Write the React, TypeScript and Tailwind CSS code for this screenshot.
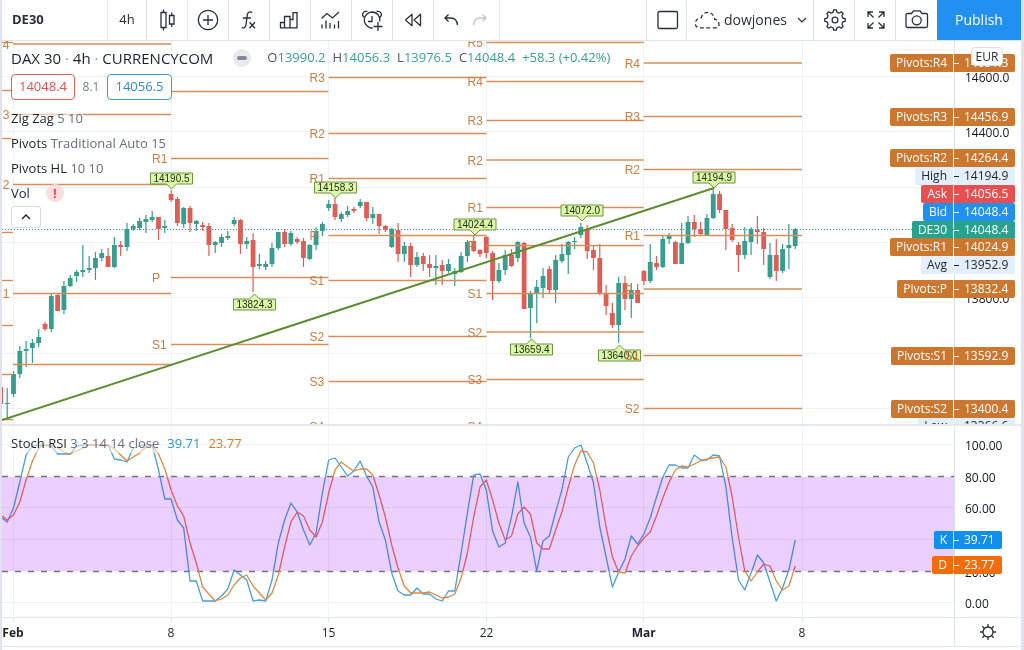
import type { ReactNode } from 'react'

type Candle = [high: number, top: number, bottom: number, low: number, dir: 'u' | 'd']
type Point = [bar: number, y: number]

const BAR = 6.304
const FIRST_X = 11.5
const barX = (i: number) => FIRST_X + i * BAR

// wick top, body top, body bottom, wick bottom in pane space, first item is bar -1
const CANDLES: Candle[] = [
  [347, 362, 363, 377, 'u'], [330, 333, 353, 356, 'u'], [305, 310, 333, 337, 'u'], [300, 308, 310, 326, 'u'],
  [298, 302, 307, 322, 'u'], [288, 296, 302, 306, 'u'], [281, 283, 288, 290, 'd'], [252, 255, 288, 291, 'u'],
  [253, 254, 270, 270, 'd'], [240, 245, 269, 273, 'u'], [234, 237, 245, 246, 'u'], [229, 231, 235, 241, 'u'],
  [204, 229, 231, 236, 'u'], [215, 227, 229, 232, 'u'], [211, 217, 227, 239, 'u'], [208, 212, 217, 220, 'u'],
  [207, 215, 226, 226, 'd'], [196, 204, 226, 227, 'u'], [200, 204, 206, 215, 'd'], [182, 188, 206, 210, 'u'],
  [183, 185, 188, 190, 'u'], [177, 180, 187, 189, 'u'], [174, 178, 181, 192, 'u'], [170, 176, 179, 181, 'u'],
  [176, 176, 188, 199, 'd'], [179, 185, 187, 192, 'u'], [149, 153, 159, 161, 'd'], [156, 158, 182, 185, 'd'],
  [166, 167, 183, 187, 'u'], [165, 167, 182, 191, 'd'], [179, 180, 183, 190, 'u'], [181, 184, 186, 190, 'd'],
  [182, 185, 204, 215, 'd'], [200, 201, 204, 212, 'u'], [193, 196, 202, 206, 'u'], [190, 195, 197, 199, 'u'],
  [176, 179, 183, 185, 'u'], [178, 179, 203, 213, 'd'], [196, 200, 203, 208, 'u'], [192, 199, 226, 251, 'd'],
  [213, 223, 225, 228, 'u'], [220, 223, 226, 229, 'u'], [202, 207, 223, 226, 'u'], [191, 191, 207, 209, 'u'],
  [188, 191, 203, 206, 'd'], [190, 192, 203, 205, 'u'], [196, 198, 201, 203, 'd'], [197, 200, 217, 226, 'd'],
  [203, 204, 218, 219, 'u'], [186, 190, 204, 209, 'u'], [181, 183, 190, 195, 'u'], [159, 163, 167, 170, 'u'],
  [157, 163, 176, 179, 'd'], [171, 173, 178, 181, 'u'], [165, 170, 174, 176, 'u'], [166, 168, 170, 172, 'd'],
  [158, 161, 165, 167, 'u'], [161, 161, 177, 180, 'd'], [166, 173, 177, 183, 'u'], [173, 173, 185, 193, 'd'],
  [184, 185, 189, 191, 'd'], [187, 188, 206, 207, 'u'], [182, 189, 213, 221, 'd'], [201, 205, 213, 221, 'u'],
  [202, 205, 224, 236, 'd'], [211, 216, 224, 226, 'u'], [212, 215, 223, 230, 'd'], [214, 223, 227, 236, 'd'],
  [214, 225, 227, 244, 'u'], [219, 224, 230, 244, 'd'], [218, 223, 230, 232, 'u'], [227, 230, 233, 245, 'u'],
  [211, 215, 231, 232, 'u'], [199, 201, 215, 221, 'u'], [194, 200, 210, 211, 'd'], [208, 209, 213, 216, 'd'],
  [195, 196, 212, 217, 'd'], [210, 212, 240, 259, 'd'], [222, 229, 240, 242, 'u'], [209, 214, 229, 234, 'u'],
  [208, 214, 225, 226, 'd'], [200, 201, 217, 221, 'u'], [201, 202, 268, 268, 'd'], [250, 252, 267, 297, 'u'],
  [239, 246, 252, 282, 'u'], [227, 235, 247, 257, 'u'], [225, 228, 249, 252, 'd'], [214, 219, 249, 262, 'u'],
  [203, 213, 220, 222, 'u'], [200, 201, 214, 233, 'u'], [196, 200, 201, 208, 'u'], [182, 186, 194, 197, 'u'],
  [184, 188, 210, 218, 'd'], [204, 209, 217, 229, 'd'], [203, 217, 253, 254, 'd'], [244, 252, 265, 274, 'd'],
  [262, 272, 284, 287, 'd'], [236, 242, 284, 302, 'u'], [235, 242, 258, 269, 'd'], [242, 249, 258, 277, 'u'],
  [243, 249, 262, 262, 'd'], [229, 230, 240, 244, 'd'], [203, 221, 240, 242, 'u'], [215, 222, 226, 229, 'd'],
  [195, 198, 226, 227, 'u'], [192, 194, 198, 203, 'u'], [200, 201, 223, 223, 'd'], [182, 202, 223, 223, 'u'],
  [175, 181, 202, 203, 'u'], [174, 181, 188, 196, 'd'], [181, 188, 193, 195, 'd'], [173, 177, 195, 195, 'u'],
  [148, 153, 177, 178, 'u'], [150, 153, 169, 172, 'd'], [169, 169, 188, 209, 'd'], [183, 187, 199, 201, 'd'],
  [201, 204, 214, 231, 'd'], [186, 200, 214, 218, 'u'], [186, 188, 201, 214, 'u'], [175, 189, 191, 203, 'd'],
  [187, 191, 208, 224, 'd'], [202, 214, 236, 238, 'u'], [198, 214, 230, 240, 'd'], [203, 208, 230, 232, 'u'],
  [183, 204, 207, 228, 'u'], [187, 188, 205, 208, 'u'],
]

// x of every pivot period and its levels
const PIVOTS: { x1: number; x2: number; levels: [string, number][] }[] = [
  { x1: 0, x2: 11, levels: [['', 1.5], ['', 49.5], ['', 97.5], ['', 191.5], ['', 239.5], ['', 284.5], ['', 333.5], ['', 378.5]] },
  { x1: 11, x2: 169, levels: [['R4', 3], ['R3', 73.5], ['R2', 143.5], ['R1', 252.5], ['P', 323.5]] },
  { x1: 169, x2: 326.5, levels: [['', 50.5], ['R1', 117.5], ['P', 236.5], ['S1', 303.5]] },
  { x1: 326.5, x2: 484.5, levels: [['R3', 36.5], ['R2', 92.5], ['R1', 137.5], ['P', 194.5], ['S1', 239.5], ['S2', 295.5], ['S3', 340.5], ['S4', 385.5]] },
  { x1: 484.5, x2: 641.7, levels: [['R5', 1.5], ['R4', 40.5], ['R3', 79.5], ['R2', 119], ['R1', 166.5], ['P', 204.5], ['S1', 252.5], ['S2', 291], ['S3', 338.5], ['S4', 385.5]] },
  { x1: 641.7, x2: 800, levels: [['R4', 22], ['R3', 75.5], ['R2', 128.5], ['R1', 194.5], ['P', 248], ['S1', 314.5], ['S2', 367.5]] },
]

const SWINGS: { text: string; x: number; y: number; up?: boolean }[] = [
  { text: '14190.5', x: 169.5, y: 148 },
  { text: '14158.3', x: 333.5, y: 157 },
  { text: '13824.3', x: 252.5, y: 253, up: true },
  { text: '14024.4', x: 473, y: 194 },
  { text: '14072.0', x: 580, y: 180 },
  { text: '13659.4', x: 529.5, y: 298, up: true },
  { text: '13640.0', x: 617.5, y: 304, up: true },
  { text: '14194.9', x: 712, y: 147 },
]

const K_START: Point[] = [
  [-1.8, 92], [-1, 96], [0, 82], [1, 56], [2, 29], [3, 20], [4, 19], [6, 20], [7, 28], [9, 28], [10, 20], [11, 19], [14, 19],
]
const K_VALUES = [
  19, 33, 34, 36, 22, 20, 19, 19, 44, 73, 73, 94, 102, 155, 155, 175, 175, 175, 170, 163, 144, 149, 154, 175, 174, 175,
  154, 117, 94, 77, 86, 104, 119, 107, 67, 34, 32, 41, 50, 45, 35, 50, 61, 96, 114, 147, 165, 169, 169, 162, 168, 168,
  173, 175, 165, 165, 127, 87, 49, 48, 64, 105, 121, 117, 91, 56, 97, 111, 145, 115, 110, 86, 64, 31, 22, 19, 37, 57,
  101, 131, 161, 146, 133, 110, 118, 108, 92, 71, 51, 39, 39, 42, 42, 29, 34, 34, 29, 30, 61, 112, 154, 164, 147, 129,
  137, 156, 175, 162, 144, 114,
]
const D_START: Point[] = [
  [-1.8, 90], [-1, 94], [0, 89], [1, 76], [2, 54], [3, 35], [4, 22], [5, 19], [6, 19], [7, 22], [8, 26], [9, 28], [10, 25], [11, 22], [12, 19], [14, 19],
]
const D_VALUES = [
  19, 23, 29, 35, 31, 27, 21, 19, 28, 43, 64, 80, 90, 117, 137, 161, 168, 175, 173, 169, 159, 152, 149, 160, 167, 174,
  167, 149, 121, 96, 86, 90, 104, 111, 96, 67, 44, 36, 41, 45, 43, 43, 49, 69, 91, 119, 142, 160, 167, 167, 167, 166,
  169, 172, 171, 168, 152, 127, 91, 61, 54, 74, 97, 114, 110, 88, 81, 88, 117, 123, 123, 104, 86, 61, 39, 25, 26, 37,
  64, 101, 131, 146, 147, 130, 120, 112, 106, 90, 72, 56, 44, 40, 41, 38, 35, 33, 32, 31, 41, 71, 111, 145, 155, 146,
  138, 140, 155, 164, 160, 140,
]

const toPoints = (start: Point[], rest: number[]) =>
  [...start, ...rest.map((y, i): Point => [i + 15, y])].map(([i, y]) => `${barX(i).toFixed(1)},${y}`).join(' ')

const K_LINE = toPoints(K_START, K_VALUES)
const D_LINE = toPoints(D_START, D_VALUES)

const TIMES = [
  { x: 11, text: 'Feb', bold: true },
  { x: 169, text: '8' },
  { x: 326.5, text: '15' },
  { x: 484.5, text: '22' },
  { x: 641.7, text: 'Mar', bold: true },
  { x: 800, text: '8' },
]

const PRICE_GRID = [
  { y: 36, text: '14600.0' },
  { y: 91, text: '14400.0' },
  { y: 147, text: '14200.0' },
  { y: 202, text: '14000.0' },
  { y: 257, text: '13800.0' },
  { y: 313, text: '13600.0' },
  { y: 368, text: '13400.0' },
]

const STOCH_GRID = [
  { y: 19, text: '100.00' },
  { y: 51, text: '80.00' },
  { y: 82, text: '60.00' },
  { y: 114, text: '40.00' },
  { y: 146, text: '20.00' },
  { y: 177, text: '0.00' },
]

const ORANGE = 'bg-[#cb7730] text-white'
const PALE = 'bg-[#e3effd] text-[#1f222c]'

const PRICE_TAGS = [
  { y: 22, name: 'Pivots:R4', value: '14651.3', color: ORANGE },
  { y: 76, name: 'Pivots:R3', value: '14456.9', color: ORANGE },
  { y: 117, name: 'Pivots:R2', value: '14264.4', color: ORANGE },
  { y: 385, name: 'Low', value: '13366.6', color: PALE },
  { y: 135, name: 'High', value: '14194.9', color: PALE },
  { y: 153, name: 'Ask', value: '14056.5', color: 'bg-[#e8504f] text-white' },
  { y: 171, name: 'Bid', value: '14048.4', color: 'bg-[#2190ee] text-white' },
  { y: 189, name: 'DE30', value: '14048.4', color: 'bg-[#26a28f] text-white' },
  { y: 224, name: 'Avg', value: '13952.9', color: PALE },
  { y: 206, name: 'Pivots:R1', value: '14024.9', color: ORANGE },
  { y: 248, name: 'Pivots:P', value: '13832.4', color: ORANGE },
  { y: 315, name: 'Pivots:S1', value: '13592.9', color: ORANGE },
  { y: 368, name: 'Pivots:S2', value: '13400.4', color: ORANGE },
]

const STOCH_TAGS = [
  { y: 114, name: 'K', value: '39.71', color: 'bg-[#0f90f0] text-white' },
  { y: 139, name: 'D', value: '23.77', color: 'bg-[#f36c0c] text-white' },
]

function Icon({ children, className = '' }: { children: ReactNode; className?: string }) {
  return (
    <svg viewBox="0 0 28 28" className={`w-7 h-7 shrink-0 ${className}`} fill="none" stroke="currentColor" strokeWidth="1.3" aria-hidden="true">
      {children}
    </svg>
  )
}

function ToolButton({ label, children, side = 'border-r' }: { label: string; children: ReactNode; side?: string }) {
  return (
    <button type="button" aria-label={label} className={`w-[41px] h-full flex items-center justify-center border-[#e0e3eb] ${side}`}>
      {children}
    </button>
  )
}

// cog outline with rounded valleys between the teeth
function gearPath(teeth: number, outer: number, inner: number) {
  const step = (Math.PI * 2) / teeth
  const at = (r: number, a: number) => `${(14 + r * Math.sin(a)).toFixed(2)} ${(14 - r * Math.cos(a)).toFixed(2)}`
  let d = `M${at(outer, -step * 0.17)}`
  for (let i = 0; i < teeth; i++) {
    const a = i * step
    d += `L${at(outer, a + step * 0.17)}L${at(inner, a + step * 0.27)}Q${at(inner - 0.6, a + step * 0.5)} ${at(inner, a + step * 0.73)}L${at(outer, a + step * 0.83)}`
  }
  return d + 'Z'
}

function Toolbar() {
  return (
    <header className="h-[41px] flex items-stretch border-b border-[#e0e3eb] text-[#2a2e39]">
      <button type="button" className="w-[106px] pl-[10px] text-left text-[13px] font-bold border-r border-[#e0e3eb]">DE30</button>
      <button type="button" className="w-[39px] text-[13px] font-medium border-r border-[#e0e3eb]">4h</button>
      <ToolButton label="Candles">
        <Icon>
          <path d="M8 6.5h5v15H8zM10.5 3.5v3M10.5 21.5v3M16.5 9.5h4.5v8.5h-4.5zM18.7 6.5v3M18.7 18v3" />
        </Icon>
      </ToolButton>
      <ToolButton label="Compare">
        <Icon>
          <circle cx="14" cy="14" r="9.7" />
          <path d="M14 9v10M9 14h10" />
        </Icon>
      </ToolButton>
      <ToolButton label="Indicators">
        <Icon>
          <path d="M17 6.8c-.6-1.300-3.700-1.700-4.500 1.200-.6 2.300-1 8.500-1.600 11.200-.5 2.500-2.600 3.300-4.100 2.300M7.800 12h8M14.500 16.300l5.500 6M20 16.300l-5.500 6" />
        </Icon>
      </ToolButton>
      <ToolButton label="Financials">
        <Icon>
          <path d="M4.500 16.500h4v5.300h-4zM8.500 10.500h5.500v11.300H8.500zM14 13.500h3M17 6.700h4v15.100h-7v-8.300h3z" />
        </Icon>
      </ToolButton>
      <ToolButton label="Templates">
        <Icon>
          <path d="M4.500 12.500l5.500-5 5.500 4.500 6.500-6M5 18.500v4M9 14.500v8M13 17v5.500M17.500 18.500v4M21.500 15v7.500" />
        </Icon>
      </ToolButton>
      <ToolButton label="Alert">
        <Icon>
          <path d="M21.800 15.500c.9-5-2.700-9.500-7.800-9.500a8 8 0 0 0-1.500 15.800c.8.200 1.300.2 2.200.2M14 10v5.500h-4M6 11.200c-3-2.500-.8-6.700 3.400-5.700M22 11.200c3-2.500.8-6.700-3.400-5.700M20 16v9M15.500 20.500h9" />
        </Icon>
      </ToolButton>
      <ToolButton label="Replay">
        <Icon>
          <path d="M13 8.300v11.400L6.500 14zM21.500 8.300v11.400L15 14z" strokeLinejoin="round" />
        </Icon>
      </ToolButton>
      <div className="w-[66px] flex items-center justify-center pr-[2px] gap-[1px] border-r border-[#e0e3eb]">
        <button type="button" aria-label="Undo">
          <Icon>
            <path d="M11.500 8.500L8 12l3.500 3.500M8 12h6c3.500 0 6 2.500 6.500 7" />
          </Icon>
        </button>
        <button type="button" aria-label="Redo" className="text-[#c3c6ce]">
          <Icon>
            <path d="M16.500 8.500L20 12l-3.500 3.500M20 12h-6c-3.500 0-6 2.500-6.500 7" />
          </Icon>
        </button>
      </div>
      <div className="flex-1" />
      <ToolButton label="Layout" side="border-x">
        <Icon>
          <rect x="5" y="5.500" width="19.500" height="17" rx="1.500" />
        </Icon>
      </ToolButton>
      <button type="button" className="w-[127px] flex items-center pl-[6px] border-r border-[#e0e3eb]">
        <Icon>
          <path d="M7 21.800H22.500C25 21.800 26.300 20 26 17.800C25.700 15.500 24 13.800 21.700 13.400C21 8.800 18 6.300 14.800 6.300C11.500 6.300 9 8.500 8.300 11.800C5 12 2.500 14 2.300 17.500C2.300 20 4 21.800 7 21.800Z" strokeDasharray="3.800 2.600" />
        </Icon>
        <span className="ml-[3px] text-sm font-medium">dowjones</span>
        <svg viewBox="0 0 10 6" className="w-[10px] h-[6px] ml-auto mr-[6px]" fill="none" stroke="currentColor" strokeWidth="1.2" aria-hidden="true">
          <path d="M1 1l4 4 4-4" />
        </svg>
      </button>
      <ToolButton label="Settings">
        <Icon className="ml-px">
          <path d={gearPath(8, 10.3, 8.3)} strokeLinejoin="round" />
          <circle cx="14" cy="14" r="2.900" />
        </Icon>
      </ToolButton>
      <ToolButton label="Fullscreen">
        <Icon className="ml-px">
          <path d="M6 11V6h5M6 6l5.500 5.500M17 6h5v5M22 6l-5.500 5.500M6 17v5h5M6 22l5.500-5.500M22 17v5h-5M22 22l-5.500-5.500" />
        </Icon>
      </ToolButton>
      <ToolButton label="Snapshot" side="border-r-0">
        <Icon>
          <path d="M4.500 7.500h4l2-2.700h6.500l2 2.700H23c.8 0 1.500.7 1.500 1.500v11c0 .8-.7 1.500-1.500 1.500H4.500c-.8 0-1.500-.7-1.500-1.500V9c0-.8.7-1.500 1.500-1.500z" />
          <circle cx="13.700" cy="14.300" r="4.500" />
        </Icon>
      </ToolButton>
      <button type="button" className="w-[84px] h-10 bg-[#2190f0] text-white text-sm font-medium">Publish</button>
    </header>
  )
}

function Legend() {
  return (
    <div className="relative pl-[9px] pt-[5px] flex flex-col items-start text-[#1f222c]">
      <div className="h-6 flex items-center">
        <h1 className="text-[15px] font-medium whitespace-nowrap">
          DAX 30 <span className="text-[#9598a1]">·</span> 4h <span className="text-[#9598a1]">·</span> CURRENCYCOM
        </h1>
        <span className="ml-5 w-[18px] h-[18px] rounded-full bg-[#e9eaee] flex items-center justify-center">
          <span className="w-[10px] h-1 rounded-full bg-[#868993]" />
        </span>
        <dl className="ml-4 flex gap-[7px] text-[13px] text-[#3a9e92] whitespace-nowrap">
          <div className="flex"><dt className="text-[#50535e]">O</dt><dd>13990.2</dd></div>
          <div className="flex"><dt className="text-[#50535e]">H</dt><dd>14056.3</dd></div>
          <div className="flex"><dt className="text-[#50535e]">L</dt><dd>13976.5</dd></div>
          <div className="flex"><dt className="text-[#50535e]">C</dt><dd>14048.4</dd></div>
          <dd>+58.3 (+0.42%)</dd>
        </dl>
      </div>
      <div className="mt-1 flex items-center text-[13px]">
        <button type="button" className="w-[64px] h-[26px] rounded-[4px] border border-[#e0605f] bg-white text-[#e0504f]">14048.4</button>
        <span className="w-8 text-center text-xs text-[#787b86]">8.1</span>
        <button type="button" className="w-[65px] h-[26px] rounded-[4px] border border-[#4398dc] bg-white text-[#2f8bd6]">14056.5</button>
      </div>
      <ul className="mt-[5px] text-[13px] leading-5">
        <li className="h-[25px] flex items-center"><span className="bg-white/50">Zig Zag <span className="text-[#6a6d78]">5 10</span></span></li>
        <li className="h-[25px] flex items-center"><span className="bg-white/50">Pivots <span className="text-[#6a6d78]">Traditional Auto 15</span></span></li>
        <li className="h-[25px] flex items-center"><span className="bg-white/50">Pivots HL <span className="text-[#6a6d78]">10 10</span></span></li>
        <li className="h-[25px] flex items-center">
          Vol
          <span className="ml-4 w-[18px] h-[18px] rounded-full bg-[#fbdedd] text-[#e0504f] font-bold flex items-center justify-center">!</span>
        </li>
      </ul>
      <button type="button" aria-label="Collapse legend" className="mt-[1px] w-[30px] h-[22px] rounded-[3px] border border-[#d6d9e0] bg-white flex items-center justify-center">
        <svg viewBox="0 0 10 6" className="w-[10px] h-[6px]" fill="none" stroke="currentColor" strokeWidth="1.4" aria-hidden="true">
          <path d="M1 5l4-4 4 4" />
        </svg>
      </button>
    </div>
  )
}

function Grid({ rows }: { rows: { y: number }[] }) {
  return (
    <g stroke="#f0f1f5">
      {rows.map(r => <line key={r.y} x1="0" x2="100%" y1={r.y - 0.5} y2={r.y - 0.5} />)}
      {TIMES.map(t => <line key={t.x} x1={Math.floor(t.x) + 0.5} x2={Math.floor(t.x) + 0.5} y1="0" y2="100%" />)}
    </g>
  )
}

function PriceChart() {
  return (
    <svg className="absolute inset-0 w-full h-full" role="img" aria-label="DAX 30 price, 4 hours">
      <Grid rows={PRICE_GRID} />
      <line x1="0" x2="100%" y1="188.5" y2="188.5" stroke="#26a28f" strokeDasharray="1 2" />
      <path d="M0.5 346v17" stroke="#dd5e56" />
      {CANDLES.map(([high, top, bottom, low, dir], i) => {
        const x = barX(i - 1)
        return (
          <g key={i} fill={dir === 'u' ? '#379d8e' : '#dd5e56'}>
            <rect x={x - 0.6} y={high} width="1.2" height={low - high} />
            <rect x={x - 2.4} y={top} width="4.8" height={Math.max(bottom - top, 1)} />
          </g>
        )
      })}
      <g stroke="#d3905a" strokeWidth="1.4">
        {PIVOTS.map(p => p.levels.map(([, y]) => <line key={`${p.x1}-${y}`} x1={p.x1} x2={p.x2} y1={y} y2={y} />))}
      </g>
      <line x1="0" y1="379" x2="712" y2="147" stroke="#5d8c31" strokeWidth="2" />
      {SWINGS.map(s => {
        const d = s.up ? 1 : -1
        const near = s.y + d * 5
        const far = s.y + d * 16
        return (
          <g key={s.text}>
            <path
              d={`M${s.x} ${s.y}L${s.x + 5} ${near}H${s.x + 21}V${far}H${s.x - 21}V${near}H${s.x - 5}Z`}
              fill="#dcf8a8"
              stroke="#6b9440"
            />
            <text x={s.x} y={(near + far) / 2 + 3.5} textAnchor="middle" fontSize="10" fill="#1c2a10">{s.text}</text>
          </g>
        )
      })}
      <g fontSize="12" fill="#c77f45">
        {PIVOTS.map(p => p.levels.map(([name, y]) => name && <text key={`${p.x1}-${y}`} x={p.x1 - 19} y={y + 4.5}>{name}</text>))}
      </g>
    </svg>
  )
}

function StochLines({ k, d, clip }: { k: string; d: string; clip: string }) {
  return (
    <g fill="none" strokeWidth="1.3" strokeLinejoin="round" clipPath={clip}>
      <polyline points={K_LINE} stroke={k} />
      <polyline points={D_LINE} stroke={d} />
    </g>
  )
}

function StochChart() {
  return (
    <svg className="absolute inset-0 w-full h-full" role="img" aria-label="Stochastic RSI">
      <clipPath id="band">
        <rect y="51" width="100%" height="94" />
      </clipPath>
      <clipPath id="outside">
        <rect width="100%" height="51" />
        <rect y="145" width="100%" height="47" />
      </clipPath>
      <rect y="51" width="100%" height="94" fill="#ebd0ff" />
      <g className="mix-blend-multiply"><Grid rows={STOCH_GRID} /></g>
      <g stroke="#77707f" strokeWidth="1.3" strokeDasharray="6 7">
        <line x1="0" x2="100%" y1="50.5" y2="50.5" />
        <line x1="0" x2="100%" y1="145.5" y2="145.5" />
      </g>
      <StochLines k="#4a9fd8" d="#dc8a44" clip="url(#outside)" />
      <StochLines k="#5083e0" d="#de5b66" clip="url(#band)" />
    </svg>
  )
}

function Scale({ rows }: { rows: { y: number; text: string }[] }) {
  return (
    <div className="relative w-[67px] shrink-0 border-l border-[#e0e3eb] text-xs font-medium text-[#14161d]">
      {rows.map(r => (
        <span key={r.text} className="absolute left-[10px] leading-4 -translate-y-1/2" style={{ top: r.y + 1 }}>{r.text}</span>
      ))}
    </div>
  )
}

function AxisTag({ y, name, value, color, place, width }: { y: number; name: string; value: string; color: string; place: string; width: string }) {
  return (
    <div className={`absolute flex h-[18px] -translate-y-1/2 gap-[1px] text-xs leading-[18px] font-medium whitespace-nowrap ${place}`} style={{ top: y }}>
      <span className={`px-[6px] rounded-l-[2px] ${color}`}>{name}</span>
      <span className={`flex items-center rounded-r-[2px] ${color} ${width}`}>
        <span className="w-[5px] h-px mr-[5px] bg-current" />
        {value}
      </span>
    </div>
  )
}

export default function App() {
  return (
    <div className="border-l-2 border-r-[3px] border-[#e0e3eb] bg-white font-['Open_Sans','Noto_Sans',sans-serif] overflow-hidden">
      <Toolbar />
      <main>
        <section className="relative h-[385px] flex border-b-2 border-[#e6e8ee] overflow-hidden">
          <div className="relative flex-1 min-w-0 overflow-hidden font-['Liberation_Sans',Arial,sans-serif]">
            <PriceChart />
            <div className="font-['Open_Sans','Noto_Sans',sans-serif]">
              <Legend />
            </div>
          </div>
          <Scale rows={PRICE_GRID} />
          {PRICE_TAGS.map(t => <AxisTag key={t.name} {...t} place="right-[6px]" width="w-[61px]" />)}
          <button type="button" className="absolute right-[18px] top-[6px] w-8 h-[19px] rounded-[4px] border border-[#dcdfe6] bg-white text-xs text-[#2a2e39] leading-4">EUR</button>
        </section>
        <section className="relative h-[192px] flex border-b border-[#e0e3eb]">
          <div className="relative flex-1 min-w-0 overflow-hidden">
            <StochChart />
            <div className="relative pl-[9px] pt-[7px] flex gap-2 text-[13px] leading-5 whitespace-nowrap">
              <span className="bg-white/50 text-[#1f222c]">Stoch RSI <span className="text-[#6a6d78]">3 3 14 14 close</span></span>
              <span className="text-[#2f93d6]">39.71</span>
              <span className="text-[#dd7a2c]">23.77</span>
            </div>
          </div>
          <Scale rows={STOCH_GRID} />
          {STOCH_TAGS.map(t => <AxisTag key={t.name} {...t} place="right-[19px]" width="w-[48px]" />)}
        </section>
        <footer className="h-[29px] flex border-b border-[#e0e3eb] mb-1">
          <div className="flex-1 min-w-0">
            <svg className="w-full h-full" fontSize="12" fill="#1f222c" role="img" aria-label="Time scale">
              {TIMES.map(t => (
                <text key={t.x} x={t.x} y="19" textAnchor="middle" fontWeight={t.bold ? 700 : 500}>{t.text}</text>
              ))}
              {TIMES.map(t => <path key={t.x} d={`M${Math.floor(t.x) + 0.5} 0v4`} stroke="#e0e3eb" />)}
            </svg>
          </div>
          <div className="w-[67px] border-l border-[#e0e3eb] flex items-center justify-center">
            <button type="button" aria-label="Scale settings" className="text-[#2a2e39]">
              <svg viewBox="0 0 18 18" className="w-[18px] h-[18px]" fill="none" stroke="currentColor" strokeWidth="1.3" aria-hidden="true">
                <circle cx="9" cy="9" r="5" />
                <path d="M9 1v3M9 14v3M1 9h3M14 9h3M3.300 3.300l2.200 2.200M12.500 12.500l2.200 2.200M14.700 3.300l-2.200 2.200M5.500 12.500l-2.200 2.200" />
              </svg>
            </button>
          </div>
        </footer>
      </main>
    </div>
  )
}
